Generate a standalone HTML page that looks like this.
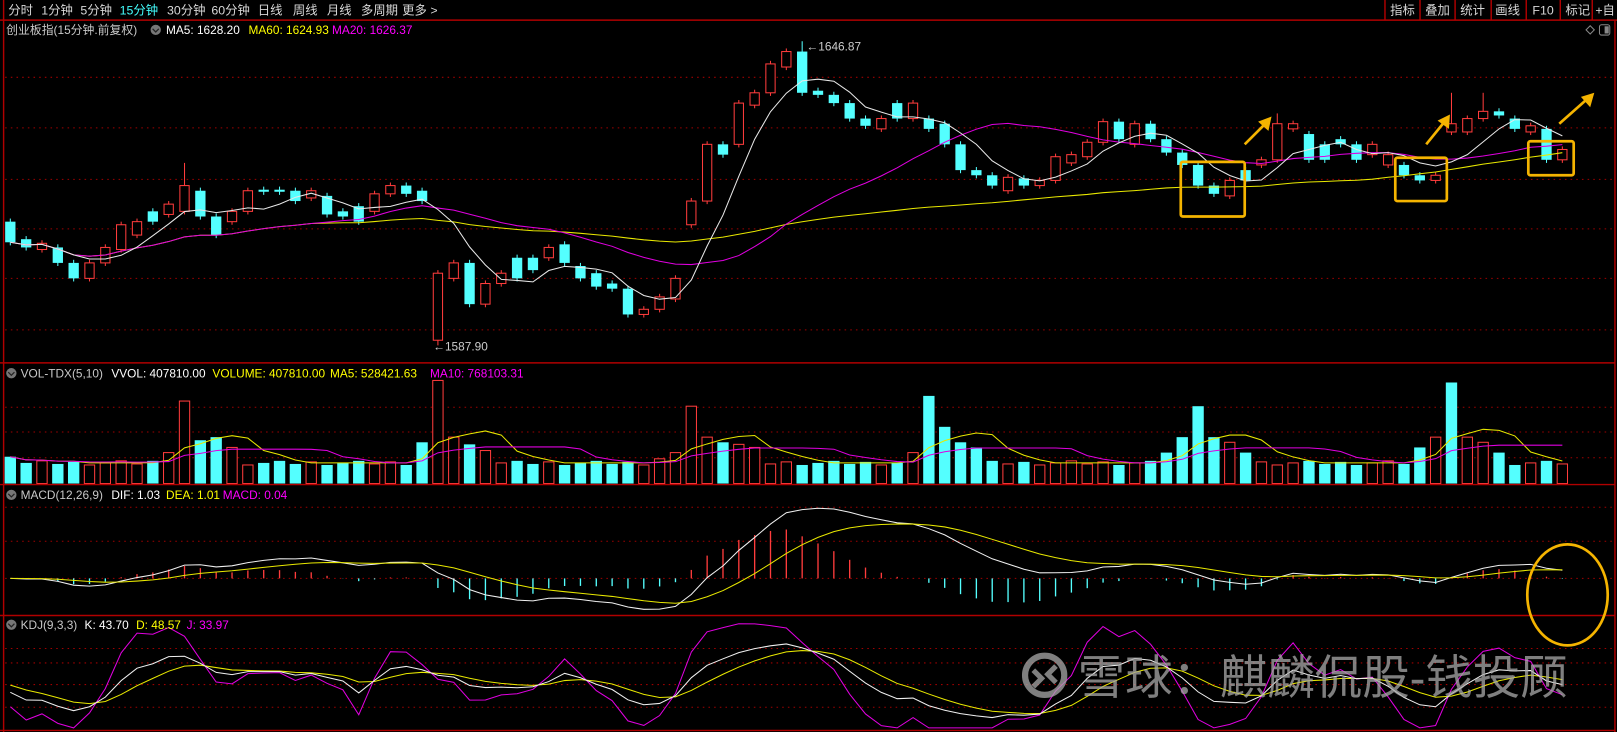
<!DOCTYPE html>
<html><head><meta charset="utf-8"><style>
html,body{margin:0;padding:0;background:#000;overflow:hidden}
svg{display:block}
text{font-family:"Liberation Sans","Noto Sans CJK SC",sans-serif}
</style></head><body>
<svg id="s" width="1617" height="732" viewBox="0 0 1568 710" preserveAspectRatio="none" xmlns="http://www.w3.org/2000/svg">
<rect width="1568" height="710" fill="#000"/>
<g id="grid"></g>
<g id="chart"></g>
<g stroke="#b00000" stroke-width="1.4" fill="none">
<line x1="0" y1="19.5" x2="1568" y2="19.5"/>
<line x1="3.5" y1="0" x2="3.5" y2="710"/>
<line x1="1566" y1="20" x2="1566" y2="710"/>
<line x1="0" y1="352" x2="1566" y2="352"/>
<line x1="0" y1="470" x2="1566" y2="470"/>
<line x1="0" y1="597" x2="1566" y2="597"/>
<line x1="0" y1="708.5" x2="1566" y2="708.5"/>
<line x1="1343" y1="0" x2="1343" y2="19"/><line x1="1377" y1="0" x2="1377" y2="19"/>
<line x1="1411" y1="0" x2="1411" y2="19"/><line x1="1446" y1="0" x2="1446" y2="19"/>
<line x1="1480" y1="0" x2="1480" y2="19"/><line x1="1513" y1="0" x2="1513" y2="19"/>
<line x1="1544" y1="0" x2="1544" y2="19"/>
</g>
<g font-size="12" fill="#d8d8d8">
<text x="8" y="14">分时</text><text x="40" y="14">1分钟</text><text x="78" y="14">5分钟</text>
<text x="116" y="14" fill="#4ff">15分钟</text><text x="162" y="14">30分钟</text><text x="205" y="14">60分钟</text>
<text x="250" y="14">日线</text><text x="284" y="14">周线</text><text x="317" y="14">月线</text>
<text x="350" y="14">多周期</text><text x="390" y="14">更多 &gt;</text>
<text x="1348" y="14">指标</text><text x="1382" y="14">叠加</text><text x="1416" y="14">统计</text>
<text x="1450" y="14">画线</text><text x="1486" y="14">F10</text><text x="1518" y="14">标记</text><text x="1547" y="14">+自</text>
</g>
<g font-size="11.5">
<text x="6" y="33" fill="#c8c8c8">创业板指(15分钟.前复权)</text>
<circle cx="151" cy="29" r="5" fill="#777"/><path d="M148 28l3 3 3-3" stroke="#222" stroke-width="1.2" fill="none"/>
<text x="161" y="33" fill="#fff">MA5: 1628.20</text>
<text x="241" y="33" fill="#ff0">MA60: 1624.93</text>
<text x="322" y="33" fill="#f0f">MA20: 1626.37</text>
<path d="M1538 29l4-4 4 4-4 4z" stroke="#888" fill="none"/>
<rect x="1551" y="24" width="10" height="10" rx="2" stroke="#888" fill="none"/><rect x="1556" y="25.5" width="4" height="7" fill="#888"/>
<circle cx="11" cy="362" r="5" fill="#777"/><path d="M8 361l3 3 3-3" stroke="#222" stroke-width="1.2" fill="none"/>
<text x="20" y="366" fill="#c8c8c8">VOL-TDX(5,10)</text><text x="108" y="366" fill="#fff">VVOL: 407810.00</text>
<text x="206" y="366" fill="#ff0">VOLUME: 407810.00</text><text x="320" y="366" fill="#ff0">MA5: 528421.63</text>
<text x="417" y="366" fill="#f0f">MA10: 768103.31</text>
<circle cx="11" cy="480" r="5" fill="#777"/><path d="M8 479l3 3 3-3" stroke="#222" stroke-width="1.2" fill="none"/>
<text x="20" y="484" fill="#c8c8c8">MACD(12,26,9)</text><text x="108" y="484" fill="#fff">DIF: 1.03</text>
<text x="161" y="484" fill="#ff0">DEA: 1.01</text><text x="216" y="484" fill="#f0f">MACD: 0.04</text>
<circle cx="11" cy="606" r="5" fill="#777"/><path d="M8 605l3 3 3-3" stroke="#222" stroke-width="1.2" fill="none"/>
<text x="20" y="610" fill="#c8c8c8">KDJ(9,3,3)</text><text x="82" y="610" fill="#fff">K: 43.70</text>
<text x="132" y="610" fill="#ff0">D: 48.57</text><text x="181" y="610" fill="#f0f">J: 33.97</text>
<text x="782" y="49" fill="#ccc">←1646.87</text>
<text x="420" y="340" fill="#ccc">←1587.90</text>
</g>
<g stroke="#f5b400" stroke-width="2.6" fill="none">
<rect x="1145" y="157" width="62" height="53" rx="2"/>
<rect x="1353" y="153" width="50" height="42" rx="2"/>
<rect x="1482" y="137" width="44" height="33" rx="2"/>
<ellipse cx="1520" cy="577" rx="39" ry="49"/>
<line x1="1207" y1="140" x2="1226" y2="121"/><line x1="1383" y1="140" x2="1400" y2="119"/><line x1="1512" y1="120" x2="1538" y2="97"/>
</g>
<g fill="#f5b400">
<path d="M1233 113l-3 14-10-9z"/><path d="M1406 111l-1 14-11-8z"/><path d="M1546 90l-4 14-9-10z"/>
</g>
<g opacity="0.75">
<circle cx="1013" cy="655" r="19" stroke="#aaa" stroke-width="6" fill="none"/>
<path d="M1002 650l8 8-8 8M1024 646l-8 8 8 8" stroke="#aaa" stroke-width="5" fill="none"/>
<text x="1045" y="673" font-size="46" fill="#aaa">雪球：麒麟侃股-钱投顾</text>
</g>
</svg>
<script>
(function(){
var C=[[215,235,0],[232,240,0],[236,242,1],[240,255,0],[255,270,0],[255,270,1],[240,255,1],[218,242,1],[215,228,1],[205,215,0],[198,208,1],[180,205,1,158],[185,210,0],[210,228,0],[205,215,1],[185,205,1],[184,186,0],[184,186,0],[185,195,0],[185,192,1],[190,208,0],[205,210,0],[200,215,0],[188,205,1],[180,188,1],[180,188,0],[185,195,0],[265,330,1,0,335],[255,270,1],[255,295,0],[275,295,1],[265,275,1],[250,270,0],[250,262,0],[240,250,1],[237,255,0],[258,270,0],[265,278,0],[275,280,0],[280,305,0],[300,305,1],[288,300,1],[270,290,1],[195,218,1],[140,195,1],[140,150,0],[100,140,1],[90,102,1],[62,90,1],[50,65,1],[50,90,0,40],[88,92,0],[92,100,0],[100,115,0],[115,122,0],[115,125,1],[100,115,0],[100,115,1],[115,125,0],[120,140,0],[140,165,0],[165,170,0],[170,180,0],[172,185,1],[173,180,0],[175,180,1],[152,175,1],[150,158,1],[138,152,1],[118,138,1],[118,135,0],[120,140,1],[120,135,0],[135,148,0],[148,160,0],[160,180,0],[180,188,0],[175,190,1],[165,175,0],[155,160,1],[120,155,1,110],[120,125,1],[130,155,0],[140,155,0],[135,140,0],[140,155,0],[140,150,1],[150,160,1],[160,170,0],[170,175,0],[170,175,1],[120,128,1,90],[115,128,1],[108,115,1,90],[108,112,0],[115,125,0],[122,128,1],[125,155,0],[145,155,1]];
var n=C.length,dx=(1515-10)/(n-1);
var g=document.getElementById("chart"),gr=document.getElementById("grid");
var h="";
function X(i){return 10+i*dx;}
var gy=[75,124,174,222,270,320,395,419,444,492,525,561,629,643,664,686];
var gh="";gy.forEach(function(y){gh+='<line x1="5" y1="'+y+'" x2="1565" y2="'+y+'" stroke="#a00000" stroke-width="1" stroke-dasharray="1.5,4"/>';});
gr.innerHTML=gh;
var cl=[],hi=[],lo=[];
for(var i=0;i<n;i++){var c=C[i];var hh=c[3]||c[0]-3,ll=c[4]||c[1]+3;hi.push(hh);lo.push(ll);cl.push(c[2]?c[0]:c[1]);}
function ma(p){var r=[];for(var i=0;i<n;i++){var s=0,k=0;for(var j=Math.max(0,i-p+1);j<=i;j++){s+=cl[j];k++;}r.push(s/k);}return r;}
function pl(arr,col,f){var d="";for(var i=0;i<n;i++){var y=f?f(arr[i]):arr[i];d+=(i?"L":"M")+X(i).toFixed(1)+" "+y.toFixed(1);}return '<path d="'+d+'" stroke="'+col+'" stroke-width="1" fill="none"/>';}
for(i=0;i<n;i++){var c=C[i],x=X(i),col=c[2]?"#ff3c3c":"#54ffff";
h+='<line x1="'+x+'" y1="'+hi[i]+'" x2="'+x+'" y2="'+lo[i]+'" stroke="'+col+'"/>';
var ht=Math.max(c[1]-c[0],1.5);
if(c[2])h+='<rect x="'+(x-4.5)+'" y="'+c[0]+'" width="9" height="'+ht+'" fill="#000" stroke="'+col+'" stroke-width="1"/>';
else h+='<rect x="'+(x-5)+'" y="'+c[0]+'" width="10" height="'+ht+'" fill="'+col+'"/>';}
h+=pl(ma(60),"#e8e800")+pl(ma(20),"#e000e0")+pl(ma(5),"#e8e8e8");
var V=[];for(i=0;i<n;i++)V.push(18+((i*7)%5));
var ov={0:26,9:22,10:30,11:80,12:42,13:45,14:35,26:40,27:100,28:45,29:38,30:32,41:24,42:30,43:75,44:45,45:40,46:38,47:35,57:30,58:85,59:55,60:40,61:35,73:30,74:45,75:75,76:45,77:40,78:30,89:35,90:45,91:98,92:45,93:40,94:30};
for(var k in ov)V[k]=ov[k];
var vcol={91:0,75:0,58:0,59:0,27:1,11:1,43:1};
var vb=469;
for(i=0;i<n;i++){x=X(i);var red=(i in vcol)?vcol[i]:C[i][2];col=red?"#ff3c3c":"#54ffff";var vh=V[i];
if(red)h+='<rect x="'+(x-5)+'" y="'+(vb-vh)+'" width="10" height="'+vh+'" fill="#000" stroke="'+col+'"/>';
else h+='<rect x="'+(x-5.5)+'" y="'+(vb-vh)+'" width="11" height="'+vh+'" fill="'+col+'"/>';}
function vma(p){var r=[];for(var i=0;i<n;i++){var s=0,k=0;for(var j=Math.max(0,i-p+1);j<=i;j++){s+=V[j];k++;}r.push(s/k);}return r;}
h+=pl(vma(5),"#e8e800",function(v){return vb-v;})+pl(vma(10),"#e000e0",function(v){return vb-v;});
var v=cl.map(function(y){return 360-y;});
function ema(a,p){var r=[],e=a[0],al=2/(p+1);for(var i=0;i<a.length;i++){e=i?al*a[i]+(1-al)*e:a[0];r.push(e);}return r;}
var e12=ema(v,12),e26=ema(v,26),dif=e12.map(function(a,i){return a-e26[i];}),dea=ema(dif,9);
var mx=0;dif.forEach(function(d){mx=Math.max(mx,Math.abs(d));});var s=68/mx,z=561;
for(i=0;i<n;i++){var b=2*(dif[i]-dea[i])*s*0.6;x=X(i);col=b>0?"#ff3c3c":"#54ffff";
h+='<line x1="'+x+'" y1="'+z+'" x2="'+x+'" y2="'+(z-b).toFixed(1)+'" stroke="'+col+'" stroke-width="1.3"/>';}
h+=pl(dif,"#f0f0f0",function(d){return z-d*s;})+pl(dea,"#e8e800",function(d){return z-d*s;});
var K=50,D=50,Ka=[],Da=[],Ja=[];
for(i=0;i<n;i++){var H=-1e9,L=1e9;for(var j=Math.max(0,i-8);j<=i;j++){H=Math.max(H,360-hi[j]);L=Math.min(L,360-lo[j]);}
var r=H>L?(v[i]-L)/(H-L)*100:50;K=2/3*K+r/3;D=2/3*D+K/3;Ka.push(K);Da.push(D);Ja.push(3*K-2*D);}
function kf(q){var y=702-q*0.82;return Math.max(599,Math.min(706,y));}
h+=pl(Ja,"#e000e0",kf)+pl(Da,"#e8e800",kf)+pl(Ka,"#f0f0f0",kf);
g.innerHTML=h;
})();
</script>
</body></html>
